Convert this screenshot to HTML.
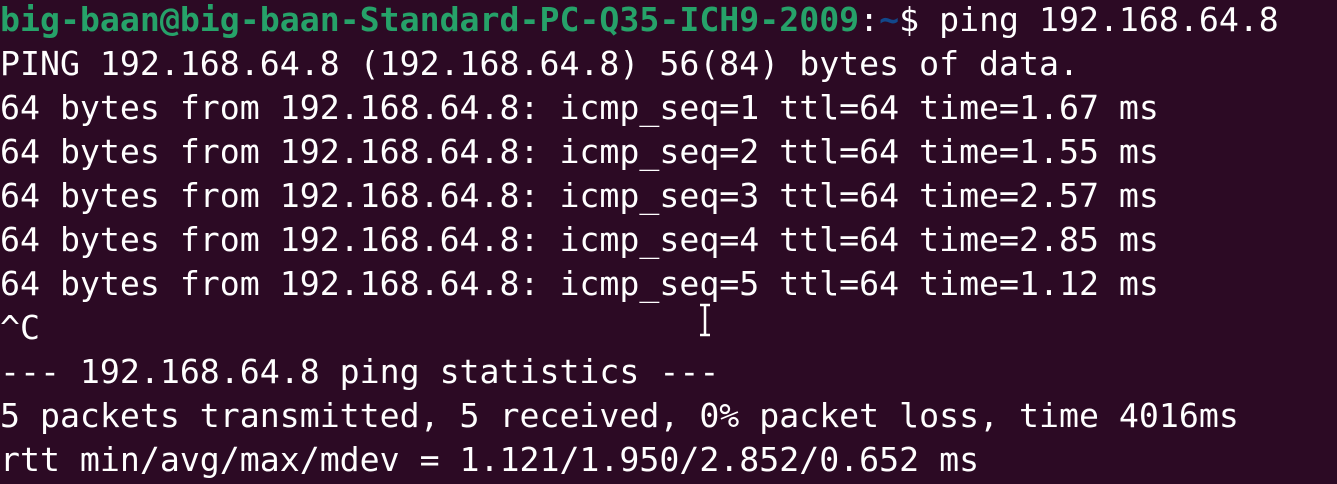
<!DOCTYPE html>
<html><head><style>
html,body{margin:0;padding:0;width:1337px;height:484px;overflow:hidden;background:#2c0a24;}
pre{margin:0;position:absolute;left:0;top:-2px;font-family:"DejaVu Sans Mono","Liberation Mono",monospace;font-size:33.2px;line-height:44px;color:#ffffff;white-space:pre;}
.g{color:#26a269;font-weight:bold}
.b{color:#12488b;font-weight:bold}
</style></head><body>
<pre><span class="g">big-baan@big-baan-Standard-PC-Q35-ICH9-2009</span>:<span class="b">~</span>$ ping 192.168.64.8
PING 192.168.64.8 (192.168.64.8) 56(84) bytes of data.
64 bytes from 192.168.64.8: icmp_seq=1 ttl=64 time=1.67 ms
64 bytes from 192.168.64.8: icmp_seq=2 ttl=64 time=1.55 ms
64 bytes from 192.168.64.8: icmp_seq=3 ttl=64 time=2.57 ms
64 bytes from 192.168.64.8: icmp_seq=4 ttl=64 time=2.85 ms
64 bytes from 192.168.64.8: icmp_seq=5 ttl=64 time=1.12 ms
^C
--- 192.168.64.8 ping statistics ---
5 packets transmitted, 5 received, 0% packet loss, time 4016ms
rtt min/avg/max/mdev = 1.121/1.950/2.852/0.652 ms</pre>
<svg style="position:absolute;left:697px;top:303px" width="16" height="34" viewBox="0 0 16 34"><path d="M3 2h10M8 2v30M3 32h10" stroke="#fff" stroke-width="2.5" fill="none"/></svg>
</body></html>
